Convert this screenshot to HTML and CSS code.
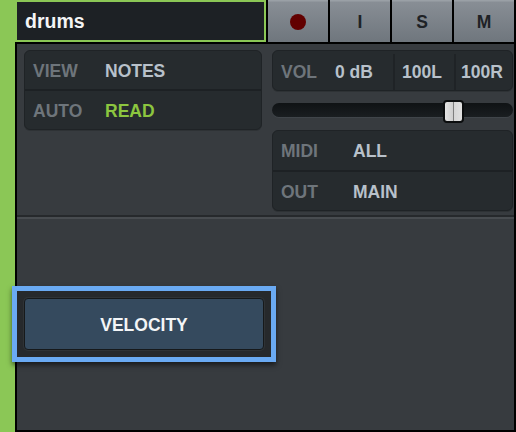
FILE: index.html
```html
<!DOCTYPE html>
<html>
<head>
<meta charset="utf-8">
<link rel="stylesheet" href="styles.css">
</head>
<body>
<div class="app">
  <div class="strip"></div>
  <div class="main">
    <div class="header">
      <div class="name">drums</div>
      <div class="btns">
        <div class="btn"><span class="rec"></span></div>
        <div class="btn">I</div>
        <div class="btn">S</div>
        <div class="btn">M</div>
      </div>
    </div>
    <div class="body">
      <div class="upper">
        <div class="card left">
          <div class="row"><span class="lab">VIEW</span><span class="val">NOTES</span></div>
          <div class="row"><span class="lab">AUTO</span><span class="val green">READ</span></div>
        </div>
        <div class="rcol">
          <div class="card vol">
            <div class="seg first"><span class="lab vlab">VOL</span><span class="val">0 dB</span></div>
            <div class="seg mid"><span class="val">100L</span></div>
            <div class="seg last"><span class="val">100R</span></div>
          </div>
          <div class="slider">
            <div class="track"></div>
            <div class="thumb"></div>
          </div>
          <div class="card midi">
            <div class="row"><span class="lab rlab">MIDI</span><span class="val">ALL</span></div>
            <div class="row"><span class="lab rlab">OUT</span><span class="val">MAIN</span></div>
          </div>
        </div>
      </div>
      <div class="sep"></div>
    </div>
  </div>
  <div class="velo">
    <div class="velo-btn">VELOCITY</div>
  </div>
</div>
</body>
</html>
```
FILE: styles.css
```css
* { box-sizing: border-box; }
html, body { margin: 0; padding: 0; background: #000; }
body { font-family: "Liberation Sans", Arial, sans-serif; font-weight: bold; }
.app {
  position: relative;
  width: 516px;
  height: 432px;
  display: flex;
  background: #000;
  overflow: hidden;
}
.strip { width: 15px; background: #8bc756; flex: none; }
.main {
  flex: 1;
  display: flex;
  flex-direction: column;
  padding: 0 2px 2px 0;
}
.header { height: 42px; display: flex; gap: 2px; flex: none; }
.name {
  width: 251px;
  background: #1d2125;
  border: 2px solid #8bc756;
  color: #f4f5f6;
  font-size: 19.5px;
  padding-left: 8px;
  padding-top: 1px;
  display: flex;
  align-items: center;
}
.btns { flex: 1; display: flex; gap: 2px; }
.btn {
  flex: 1;
  background: linear-gradient(#9aa0a6 0, #9aa0a6 1px, #888e95 2px, #6f767d 100%);
  color: #1e2226;
  font-size: 17.5px;
  display: flex;
  align-items: center;
  justify-content: center;
  padding-top: 3px;
}
.rec { width: 16px; height: 16px; border-radius: 50%; background: #620000; display: block; margin-top: -2px; }
.body {
  flex: 1;
  margin: 2px 0 0 2px;
  background: #373b3f;
  display: flex;
  flex-direction: column;
}
.upper {
  height: 171px;
  display: flex;
  gap: 10px;
  padding: 6px 1px 0 7px;
}
.card {
  background: #262b2e;
  border: 1px solid #1f2326;
  border-radius: 6px;
  box-shadow: 0 1px 0 #2e3235;
}
.left { width: 238px; height: 80px; display: flex; flex-direction: column; }
.row {
  flex: 1;
  display: flex;
  align-items: center;
  font-size: 17.5px;
  padding-top: 3px;
}
.row + .row { border-top: 2px solid #1d2124; }
.lab { color: #6e757b; }
.left .lab { width: 80px; padding-left: 8px; }
.val { color: #b8c1ca; }
.green { color: #8cc63f; }
.rcol { width: 241px; display: flex; flex-direction: column; }
.vol { height: 41px; display: flex; font-size: 17.5px; padding-top: 3px; }
.seg { display: flex; align-items: center; }
.seg.first { width: 120px; padding-left: 8px; }
.vlab { width: 54px; }
.seg.mid { width: 61px; border-left: 2px solid #1f2326; padding-left: 7px; }
.seg.last { flex: 1; border-left: 2px solid #1f2326; padding-left: 5px; }
.slider { height: 39px; position: relative; }
.track {
  margin-top: 12px;
  height: 14px;
  border-radius: 7px;
  background: linear-gradient(#0f1214, #1a1e21);
  box-shadow: 0 1px 0 #40454a;
}
.thumb {
  position: absolute;
  left: 171px;
  top: 9px;
  width: 21px;
  height: 23px;
  border: 2px solid #0b0d0e;
  border-radius: 4px;
  background: linear-gradient(90deg, #e4e4e4 0, #cfcfcf 45%, #7e7e7e 45%, #7e7e7e 55%, #d6d6d6 55%, #e0e0e0 100%);
}
.midi { height: 81px; display: flex; flex-direction: column; }
.rlab { width: 80px; padding-left: 8px; }
.sep {
  height: 4px;
  border-top: 2px solid #26292c;
  border-bottom: 2px solid #484c50;
}
.velo {
  position: absolute;
  left: 12px;
  top: 286px;
  width: 264px;
  height: 76px;
  border: 5px solid #6aaaf3;
  background: #26292c;
  padding: 7px;
  box-shadow: 0 3px 5px rgba(0,0,0,0.55);
}
.velo-btn {
  height: 100%;
  background: #354a5e;
  border: 1px solid #16191b;
  border-radius: 4px;
  box-shadow: 0 0 0 1px #2f3336;
  color: #f3f5f7;
  font-size: 17.5px;
  padding-top: 3px;
  display: flex;
  align-items: center;
  justify-content: center;
}
```
